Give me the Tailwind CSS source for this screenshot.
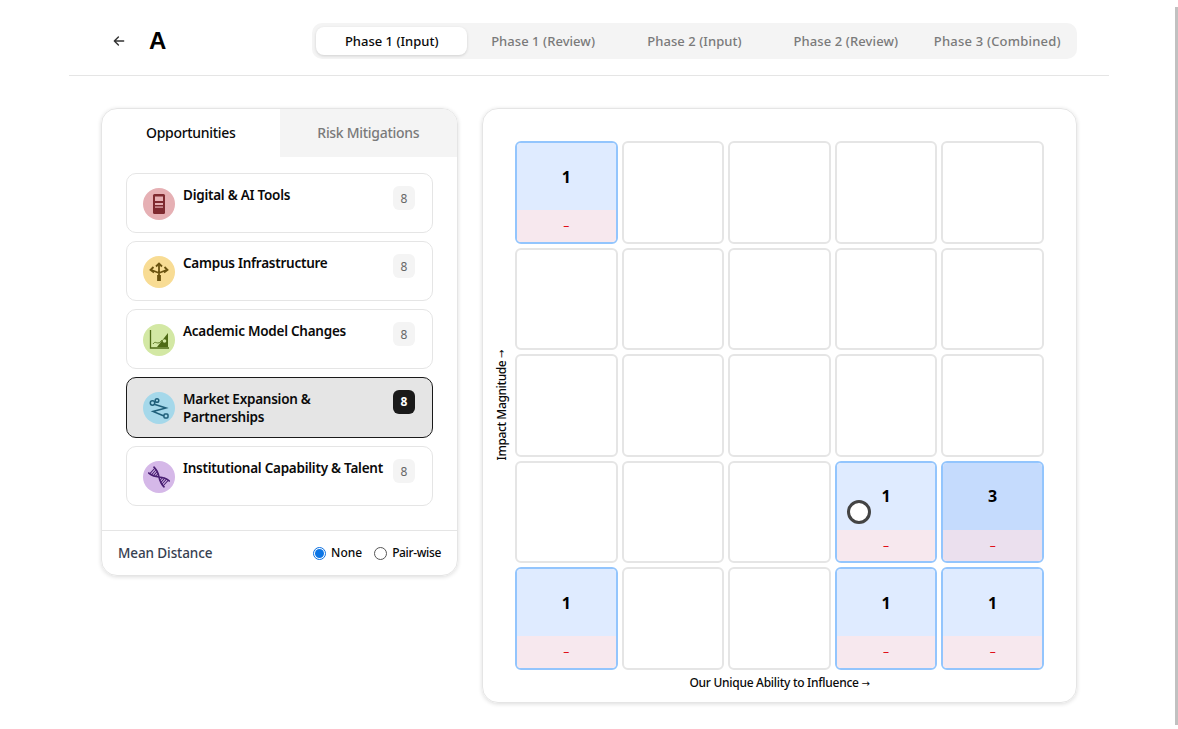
<!DOCTYPE html>
<html lang="en">
<head>
    <meta charset="UTF-8">
    <title>Matrix</title>
    <script src="https://cdn.jsdelivr.net/npm/@tailwindcss/browser@4"></script>
</head>
<body class="bg-white h-[729px] overflow-hidden font-['Noto_Sans','Open_Sans',sans-serif] text-[#0a0a0a]">
    <!-- scrollbar thumb -->
    <div class="absolute right-0 top-[7px] w-[3px] h-[718px] bg-[#c1c1c1]"></div>

    <div class="w-[1040px] ml-[69px]">
        <!-- Header -->
        <header class="h-[76px] border-b border-[#e5e5e5] pt-[23px] pl-[43px] pr-[32px] flex justify-between">
            <div class="flex items-center h-[36px] gap-[23px]">
                <svg class="w-[14px] h-[14px] text-[#333]" viewBox="0 0 24 24" fill="none" stroke="currentColor" stroke-width="2.4" stroke-linecap="round" stroke-linejoin="round"><path d="M20 12H4M11 5l-7 7 7 7"/></svg>
                <span class="text-[24px] font-bold leading-none text-black font-['Liberation_Sans',sans-serif]">A</span>
            </div>
            <nav class="w-[765px] h-[36px] bg-[#f4f4f4] rounded-[10px] p-[4px] grid grid-cols-5 text-[13px] font-medium text-[#7a7a7a]">
                <button class="bg-white rounded-[8px] shadow-[0_1px_3px_rgba(0,0,0,0.15)] text-[#0a0a0a] pt-px">Phase 1 (Input)</button>
                <button class="pt-px tracking-[0.05px]">Phase 1 (Review)</button>
                <button class="pt-px tracking-[0.05px]">Phase 2 (Input)</button>
                <button class="pt-px tracking-[0.1px]">Phase 2 (Review)</button>
                <button class="pt-px tracking-[0.2px]">Phase 3 (Combined)</button>
            </nav>
        </header>

        <main class="flex items-start gap-[24px] pl-[32px] pt-[32px]">
            <!-- Left panel -->
            <section class="w-[357px] h-[468px] border border-[#e5e5e5] rounded-[16px] shadow-[0_1px_4px_rgba(0,0,0,0.14)] overflow-hidden flex flex-col">
                <div class="grid grid-cols-2 h-[48px] shrink-0 text-[14px] font-medium tracking-[-0.3px]">
                    <div class="flex items-center justify-center pb-[2px]">Opportunities</div>
                    <div class="flex items-center justify-center pb-[2px] bg-[#f4f4f4] text-[#7a7a7a]">Risk Mitigations</div>
                </div>
                <div class="flex-1 px-[24px] pt-[16px] flex flex-col gap-[8px]">
                    <div class="h-[60px] border border-[#e5e5e5] rounded-[10px] pl-[16px] pr-[17px] pt-[12px] flex items-start">
                        <div class="w-[32px] h-[32px] mt-[2px] rounded-full bg-[#e6b0b4] flex items-center justify-center shrink-0">
                            <svg class="w-[24px] h-[24px]" viewBox="0 0 24 24"><rect x="6" y="2" width="12" height="20" rx="1.500" fill="#7f2a30"/><rect x="8" y="4.500" width="8" height="4.500" fill="#e6b0b4"/><rect x="8" y="11" width="8" height="2" fill="#e6b0b4"/><rect x="8" y="14.500" width="8" height="1.200" fill="#e6b0b4"/></svg>
                        </div>
                        <div class="flex-1 ml-[8px] text-[13.5px] leading-[18px] font-semibold tracking-[-0.25px]">Digital &amp; AI Tools</div>
                        <div class="w-[22px] h-[24px] pt-px rounded-[6px] bg-[#f4f4f4] text-[#666] text-[12px] flex items-center justify-center">8</div>
                    </div>
                    <div class="h-[60px] border border-[#e5e5e5] rounded-[10px] pl-[16px] pr-[17px] pt-[12px] flex items-start">
                        <div class="w-[32px] h-[32px] mt-[2px] rounded-full bg-[#f8dc94] flex items-center justify-center shrink-0">
                            <svg class="w-[22px] h-[22px]" viewBox="0 0 22 22" fill="none" stroke="#6b5310" stroke-width="2"><path d="M11 20v-9M11 11V3M11 12 3.500 9M11 12l7.500-3" stroke-width="1.800"/><path d="M11 20v-6" stroke-width="3.800"/><path d="M8 5.500l3-3 3 3M5.500 6 2.500 9l3.500 2.500M16.500 6l3 3-3.500 2.500" stroke-width="1.800"/></svg>
                        </div>
                        <div class="flex-1 ml-[8px] text-[13.5px] leading-[18px] font-semibold tracking-[-0.25px]">Campus Infrastructure</div>
                        <div class="w-[22px] h-[24px] pt-px rounded-[6px] bg-[#f4f4f4] text-[#666] text-[12px] flex items-center justify-center">8</div>
                    </div>
                    <div class="h-[60px] border border-[#e5e5e5] rounded-[10px] pl-[16px] pr-[17px] pt-[12px] flex items-start">
                        <div class="w-[32px] h-[32px] mt-[2px] rounded-full bg-[#d3e8a4] flex items-center justify-center shrink-0">
                            <svg class="w-[22px] h-[22px]" viewBox="0 0 22 22" fill="none" stroke="#4f6b16" stroke-width="1.300"><path d="M2.500 1v18H21"/><path d="M5 15c2-3 3-1 5-1s3-2 4-3" stroke-width=".9"/><path d="M20 4v14H9z" fill="#4f6b16" stroke="none"/><circle cx="16.500" cy="12" r="1.800" fill="#d3e8a4" stroke="none"/></svg>
                        </div>
                        <div class="flex-1 ml-[8px] text-[13.5px] leading-[18px] font-semibold tracking-[-0.25px]">Academic Model Changes</div>
                        <div class="w-[22px] h-[24px] pt-px rounded-[6px] bg-[#f4f4f4] text-[#666] text-[12px] flex items-center justify-center">8</div>
                    </div>
                    <div class="h-[61px] border border-[#1a1a1a] bg-[#e5e5e5] rounded-[10px] pl-[16px] pr-[17px] pt-[12px] flex items-start">
                        <div class="w-[32px] h-[32px] mt-[2px] rounded-full bg-[#a5d8ea] flex items-center justify-center shrink-0">
                            <svg class="w-[22px] h-[22px]" viewBox="0 0 22 22" fill="none" stroke="#1f5f7a" stroke-width="1.500"><circle cx="4.500" cy="6" r="2.200"/><circle cx="9" cy="3.500" r="1.800"/><path d="M7 7.500 18 11 5 14.500 16 19"/><rect x="16" y="17" width="4" height="4" rx="1"/></svg>
                        </div>
                        <div class="flex-1 ml-[8px] text-[13.5px] leading-[18px] font-semibold tracking-[-0.25px]">Market Expansion &amp;<br>Partnerships</div>
                        <div class="w-[22px] h-[24px] rounded-[6px] bg-[#1a1a1a] text-white font-bold text-[12px] flex items-center justify-center">8</div>
                    </div>
                    <div class="h-[60px] border border-[#e5e5e5] rounded-[10px] pl-[16px] pr-[17px] pt-[12px] flex items-start">
                        <div class="w-[32px] h-[32px] mt-[2px] rounded-full bg-[#d5b8e8] flex items-center justify-center shrink-0">
                            <svg class="w-[22px] h-[22px]" viewBox="0 0 22 22" fill="none" stroke="#4a1f73"><g transform="translate(11 11) rotate(42)"><path d="M-11-4C-6-4-4-3 0 0S6 4 11 4M-11 4C-6 4-4 3 0 0S6-4 11-4" stroke-width="1.600"/><path d="M-9-4V4M-7-3.800V3.800M-5-3.300V3.300M-3-2.300V2.300M3-2.300V2.300M5-3.300V3.300M7-3.800V3.800M9-4V4" stroke-width="1"/></g></svg>
                        </div>
                        <div class="flex-1 ml-[8px] text-[13.5px] leading-[18px] font-semibold tracking-[-0.25px] whitespace-nowrap">Institutional Capability &amp; Talent</div>
                        <div class="w-[22px] h-[24px] pt-px rounded-[6px] bg-[#f4f4f4] text-[#666] text-[12px] flex items-center justify-center shrink-0">8</div>
                    </div>
                </div>
                <div class="h-[45px] shrink-0 border-t border-[#e5e5e5] pl-[16px] pr-[16px] flex items-center justify-between">
                    <span class="text-[13.5px] font-medium text-[#374151] tracking-[-0.1px]">Mean Distance</span>
                    <div class="flex items-center text-[12px] font-medium">
                        <span class="w-[13px] h-[13px] rounded-full border border-[#0b6fe0] flex items-center justify-center"><span class="w-[9px] h-[9px] rounded-full bg-[#0b75e6]"></span></span>
                        <span class="ml-[5px]">None</span>
                        <span class="ml-[12px] w-[13px] h-[13px] rounded-full border border-[#555]"></span>
                        <span class="ml-[5px] tracking-[-0.35px]">Pair-wise</span>
                    </div>
                </div>
            </section>

            <!-- Matrix panel -->
            <section class="w-[595px] h-[595px] border border-[#e5e5e5] rounded-[16px] shadow-[0_1px_4px_rgba(0,0,0,0.14)] pt-[32px] pl-[8px] pr-[32px]">
                <div class="flex items-stretch">
                    <div class="w-[24px] flex items-center justify-center">
                        <span class="[writing-mode:vertical-rl] rotate-180 text-[12px] font-medium tracking-[-0.4px] whitespace-nowrap mr-[3px]">Impact Magnitude <span class="font-['DejaVu_Sans',sans-serif] text-[10px]">→</span></span>
                    </div>
                    <div class="relative w-[529px] h-[529px] grid grid-cols-5 grid-rows-5 gap-[4px]">
                        <div class="border-2 border-[#93c5fd] rounded-[6px] overflow-hidden flex flex-col">
                            <div class="h-[67px] bg-[#dfebff] flex items-center justify-center font-bold text-[16px] text-black">1</div>
                            <div class="flex-1 bg-[#f7e8ee] flex items-center justify-center text-[12px] text-[#e0101a]">–</div>
                        </div>
                        <div class="border-2 border-[#e5e5e5] rounded-[6px]"></div>
                        <div class="border-2 border-[#e5e5e5] rounded-[6px]"></div>
                        <div class="border-2 border-[#e5e5e5] rounded-[6px]"></div>
                        <div class="border-2 border-[#e5e5e5] rounded-[6px]"></div>

                        <div class="border-2 border-[#e5e5e5] rounded-[6px]"></div>
                        <div class="border-2 border-[#e5e5e5] rounded-[6px]"></div>
                        <div class="border-2 border-[#e5e5e5] rounded-[6px]"></div>
                        <div class="border-2 border-[#e5e5e5] rounded-[6px]"></div>
                        <div class="border-2 border-[#e5e5e5] rounded-[6px]"></div>

                        <div class="border-2 border-[#e5e5e5] rounded-[6px]"></div>
                        <div class="border-2 border-[#e5e5e5] rounded-[6px]"></div>
                        <div class="border-2 border-[#e5e5e5] rounded-[6px]"></div>
                        <div class="border-2 border-[#e5e5e5] rounded-[6px]"></div>
                        <div class="border-2 border-[#e5e5e5] rounded-[6px]"></div>

                        <div class="border-2 border-[#e5e5e5] rounded-[6px]"></div>
                        <div class="border-2 border-[#e5e5e5] rounded-[6px]"></div>
                        <div class="border-2 border-[#e5e5e5] rounded-[6px]"></div>
                        <div class="relative border-2 border-[#93c5fd] rounded-[6px] overflow-hidden flex flex-col">
                            <div class="h-[67px] bg-[#dfebff] flex items-center justify-center font-bold text-[16px] text-black">1</div>
                            <div class="flex-1 bg-[#f7e8ee] flex items-center justify-center text-[12px] text-[#e0101a]">–</div>
                            <!-- position marker -->
                            <div class="absolute left-[10px] top-[37px] w-[24px] h-[24px] rounded-full bg-white border-[3px] border-[#444]"></div>
                        </div>
                        <div class="border-2 border-[#93c5fd] rounded-[6px] overflow-hidden flex flex-col">
                            <div class="h-[67px] bg-[#c5dbfd] flex items-center justify-center font-bold text-[16px] text-black">3</div>
                            <div class="flex-1 bg-[#ebe0ee] flex items-center justify-center text-[12px] text-[#e0101a]">–</div>
                        </div>

                        <div class="border-2 border-[#93c5fd] rounded-[6px] overflow-hidden flex flex-col">
                            <div class="h-[67px] bg-[#dfebff] flex items-center justify-center font-bold text-[16px] text-black">1</div>
                            <div class="flex-1 bg-[#f7e8ee] flex items-center justify-center text-[12px] text-[#e0101a]">–</div>
                        </div>
                        <div class="border-2 border-[#e5e5e5] rounded-[6px]"></div>
                        <div class="border-2 border-[#e5e5e5] rounded-[6px]"></div>
                        <div class="border-2 border-[#93c5fd] rounded-[6px] overflow-hidden flex flex-col">
                            <div class="h-[67px] bg-[#dfebff] flex items-center justify-center font-bold text-[16px] text-black">1</div>
                            <div class="flex-1 bg-[#f7e8ee] flex items-center justify-center text-[12px] text-[#e0101a]">–</div>
                        </div>
                        <div class="border-2 border-[#93c5fd] rounded-[6px] overflow-hidden flex flex-col">
                            <div class="h-[67px] bg-[#dfebff] flex items-center justify-center font-bold text-[16px] text-black">1</div>
                            <div class="flex-1 bg-[#f7e8ee] flex items-center justify-center text-[12px] text-[#e0101a]">–</div>
                        </div>
                    </div>
                </div>
                <div class="ml-[24px] w-[529px] text-center text-[12px] font-medium tracking-[-0.28px] mt-[4px]">Our Unique Ability to Influence <span class="font-['DejaVu_Sans',sans-serif] text-[10px]">→</span></div>
            </section>
        </main>
    </div>
</body>
</html>
